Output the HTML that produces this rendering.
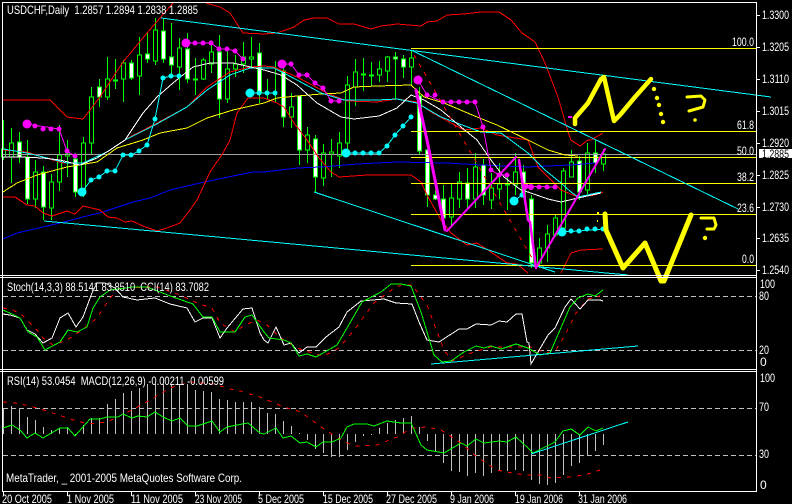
<!DOCTYPE html>
<html><head><meta charset="utf-8"><style>
html,body{margin:0;padding:0;background:#000;width:792px;height:504px;overflow:hidden}
svg{display:block}
text{font-family:"Liberation Sans",sans-serif;font-size:12px;fill:#fff}
.l{fill:none;stroke-width:1;shape-rendering:crispEdges}
.d{fill:none;stroke:#f00;stroke-dasharray:4 6;shape-rendering:crispEdges}
</style></head><body>
<svg width="792" height="504" viewBox="0 0 792 504" xmlns="http://www.w3.org/2000/svg">
<rect width="792" height="504" fill="#000"/>
<!-- wicks -->
<path class="l" stroke="#0f0" d="M3.5 120V160M11.5 128V183M19.5 132V163M27.5 140V204M35.5 160V208M43.5 166V220M51.5 174V220M59.5 125V191M67.5 140V177M75.5 153V197M83.5 137V197M91.5 87V155M99.5 79V107M107.5 57V100M115.5 59V89M123.5 60V102M131.5 60V80M139.5 37V95M147.5 33V63M155.5 18V65M163.5 18V63M171.5 23V75M179.5 38V90M187.5 33V83M195.5 58V95M203.5 58V80M211.5 42V73M219.5 35V118M227.5 50V103M235.5 55V77M243.5 42V73M251.5 37V68M259.5 43V103M267.5 79V100M275.5 61V103M283.5 60V127M291.5 93V128M299.5 96V165M307.5 127V163M315.5 135V192M323.5 144V186M331.5 139V177M339.5 132V168M347.5 76V150M355.5 59V106M363.5 58V91M371.5 62V86M379.5 61V82M387.5 56V82M395.5 52V100M403.5 55V78M411.5 50V86M419.5 87V155M427.5 148V207M435.5 190V200M443.5 185V228M451.5 183V226M459.5 172V208M467.5 168V210M475.5 153V208M483.5 159V205M491.5 173V209M499.5 163V199M507.5 173V210M515.5 153V195M523.5 165V198M531.5 195V268M539.5 238V268M547.5 225V262M555.5 215V237M563.5 168V230M571.5 150V177M579.5 156V200M587.5 143V194M595.5 140V173M603.5 149V171"/>
<!-- hollow bodies -->
<path class="l" stroke="#0f0" style="fill:#000" d="M1.5 149h4V157h-4zM9.5 143h4V157h-4zM33.5 172h4V199h-4zM49.5 182h4V208h-4zM57.5 155h4V182h-4zM65.5 154h4V156h-4zM81.5 143h4V190h-4zM89.5 97h4V143h-4zM105.5 79h4V97h-4zM121.5 63h4V79h-4zM137.5 55h4V76h-4zM153.5 30h4V61h-4zM177.5 48h4V67h-4zM201.5 60h4V79h-4zM209.5 52h4V64h-4zM225.5 69h4V99h-4zM233.5 64h4V69h-4zM241.5 57h4V64h-4zM249.5 57h4V59h-4zM289.5 107h4V117h-4zM305.5 135h4V150h-4zM321.5 153h4V178h-4zM329.5 152h4V154h-4zM337.5 143h4V156h-4zM345.5 85h4V143h-4zM353.5 72h4V87h-4zM377.5 69h4V75h-4zM385.5 57h4V71h-4zM409.5 58h4V67h-4zM449.5 198h4V217h-4zM457.5 182h4V199h-4zM473.5 167h4V199h-4zM489.5 188h4V200h-4zM497.5 184h4V189h-4zM513.5 172h4V185h-4zM537.5 248h4V263h-4zM545.5 234h4V248h-4zM553.5 218h4V235h-4zM561.5 171h4V228h-4zM569.5 162h4V177h-4zM585.5 153h4V190h-4zM601.5 154h4V164h-4zM113.5 80h4v1h-4zM193.5 79h4v1h-4zM361.5 74h4v1h-4zM369.5 75h4v1h-4z"/>
<!-- white bodies -->
<path class="l" stroke="#0f0" style="fill:#fff" d="M17.5 142h4V157h-4zM25.5 157h4V199h-4zM41.5 172h4V207h-4zM73.5 159h4V192h-4zM97.5 87h4V97h-4zM129.5 63h4V78h-4zM145.5 54h4V59h-4zM161.5 31h4V59h-4zM169.5 57h4V65h-4zM185.5 49h4V79h-4zM217.5 52h4V99h-4zM257.5 53h4V93h-4zM281.5 71h4V117h-4zM297.5 96h4V150h-4zM313.5 139h4V177h-4zM393.5 57h4V59h-4zM401.5 59h4V67h-4zM417.5 96h4V151h-4zM425.5 150h4V195h-4zM433.5 195h4V199h-4zM441.5 199h4V218h-4zM465.5 183h4V199h-4zM481.5 165h4V195h-4zM505.5 184h4V185h-4zM521.5 172h4V197h-4zM529.5 199h4V263h-4zM577.5 161h4V192h-4zM593.5 153h4V163h-4z"/>
<!-- bid line -->
<path class="l" stroke="#a0a0a0" d="M3 154.5H756"/>
<!-- blue MA -->
<polyline class="l" stroke="#00f" points="3,239 17,233 43,227 60,223 83,217 103,212 133,202 150,198 170,190 200,183 233,176 253,172 264,172 297,168 321,167 357,164 397,162 447,163 481,165 528,167 548,166 571,165 595,163"/>
<!-- red bands -->
<polyline class="l" stroke="#f00" points="3,100 50,100 67,117 83,119 100,97 123,62 147,33 173,3"/>
<polyline class="l" stroke="#f00" points="206,3 220,7 230,13 243,33 264,34 277,33 294,27 304,20 314,18 327,18 339,24 354,24 371,29 381,26 397,24 421,26 427,22 437,21 447,15 464,14 481,12 499,12 511,20 522,33 528,37 535,42 545,63 558,97 568,132 571,140 580,146 588,140 591,140 603,133"/>
<polyline class="l" stroke="#f00" points="3,197 15,197 27,205 35,206 43,213 52,216 67,211 75,214 83,206 100,210 108,217 117,218 125,222 132,221 143,226 157,231 167,228 180,223 190,210 197,200 210,172 223,153 230,140 237,113 248,98 264,98 277,103 284,107 294,123 307,140 319,158 331,172 339,177 367,175 411,175 421,182 427,195 441,220 451,233 467,245 477,243 491,252 507,263 517,264 528,273"/>
<polyline class="l" stroke="#f00" points="561,273 571,253 581,250 603,249"/>
<!-- red mid -->
<polyline class="l" stroke="#f00" points="3,150 27,152 43,157 63,163 83,163 107,152 128,138 157,123 187,107 207,87 230,72 250,67 264,66 274,67 297,77 327,93 347,101 377,102 397,99 417,102 431,112 451,123 464,130 481,128 497,135 528,140 538,167 561,190 578,197 595,195 603,192"/>
<!-- yellow MA -->
<polyline class="l" stroke="#ff0" points="3,192 17,183 37,175 67,167 97,162 117,148 143,140 160,133 187,128 207,118 233,110 264,103 277,98 297,96 321,94 341,93 354,87 377,86 411,85 424,97 444,103 477,117 497,125 528,140 548,150 565,155 578,156"/>
<!-- cyan MA -->
<polyline class="l" stroke="#0ff" points="3,149 27,153 43,157 67,163 83,163 107,152 125,140 155,125 187,107 207,90 230,75 250,68 264,68 274,68 297,80 321,93 344,100 377,100 397,99 417,103 441,117 481,132 501,133 528,153 545,170 561,183 571,192 578,197 601,192"/>
<!-- white MA -->
<polyline class="l" stroke="#fff" points="3,157 20,157 43,158 60,160 80,165 97,158 110,150 125,140 143,113 157,97 173,83 193,67 210,63 233,63 264,70 281,75 297,85 317,103 341,117 354,119 379,116 397,108 411,95 424,100 441,110 461,127 477,140 491,160 504,177 521,190 528,192 548,199 561,202 578,198 601,193"/>
<!-- magenta SAR -->
<g fill="#f0f" stroke="none">
<polyline class="l" stroke="#f0f" points="27,124 59,129 67,151 75,156"/>
<circle cx="27" cy="124" r="4.5"/><circle cx="35" cy="126" r="2.5"/><circle cx="43" cy="129" r="2.5"/><circle cx="51" cy="129" r="2.5"/><circle cx="59" cy="129" r="2.5"/><circle cx="67" cy="151" r="2.5"/><circle cx="75" cy="156" r="2.5"/>
<polyline class="l" stroke="#f0f" points="187,43 211,43 219,49 227,49 235,51 243,59"/>
<circle cx="186" cy="43" r="4.5"/><circle cx="195" cy="43" r="2.5"/><circle cx="203" cy="43" r="2.5"/><circle cx="211" cy="43" r="2.5"/><circle cx="219" cy="49" r="2.5"/><circle cx="227" cy="49" r="2.5"/><circle cx="235" cy="51" r="2.5"/><circle cx="243" cy="59" r="2.5"/>
<polyline class="l" stroke="#f0f" points="282,64 291,64 299,75 307,75 315,83 323,88 331,101 339,101"/>
<circle cx="282" cy="64" r="4.5"/><circle cx="291" cy="64" r="2.5"/><circle cx="299" cy="75" r="2.5"/><circle cx="307" cy="75" r="2.5"/><circle cx="315" cy="83" r="2.5"/><circle cx="323" cy="88" r="2.5"/><circle cx="331" cy="101" r="2.5"/><circle cx="339" cy="101" r="2.5"/>
<polyline class="l" stroke="#f0f" points="418,80 427,95 443,102 475,102 483,127 491,170 499,175 507,175"/>
<circle cx="418" cy="80" r="4.5"/><circle cx="427" cy="95" r="2.5"/><circle cx="435" cy="95" r="2.5"/><circle cx="443" cy="102" r="2.5"/><circle cx="451" cy="102" r="2.5"/><circle cx="459" cy="102" r="2.5"/><circle cx="467" cy="102" r="2.5"/><circle cx="475" cy="102" r="2.5"/><circle cx="483" cy="127" r="2.5"/><circle cx="491" cy="170" r="2.5"/><circle cx="499" cy="175" r="2.5"/><circle cx="507" cy="175" r="2.5"/>
<polyline class="l" stroke="#f0f" points="525,186 555,187"/>
<circle cx="525" cy="186" r="3.5"/><circle cx="531" cy="187" r="3"/><circle cx="539" cy="187" r="2.5"/><circle cx="547" cy="187" r="2.5"/><circle cx="555" cy="187" r="2.5"/>
<rect x="568" y="116" width="4" height="2"/>
</g>
<!-- cyan SAR -->
<g fill="#0ff">
<polyline class="l" stroke="#0ff" points="82,192 91,180 99,177 107,171 115,171 123,155 131,155 139,151 147,145 155,119 163,78 171,76 179,76"/>
<circle cx="82" cy="192" r="4.5"/><circle cx="91" cy="180" r="2.5"/><circle cx="99" cy="177" r="2.5"/><circle cx="107" cy="171" r="2.5"/><circle cx="115" cy="171" r="2.5"/><circle cx="123" cy="155" r="2.5"/><circle cx="131" cy="155" r="2.5"/><circle cx="139" cy="151" r="2.5"/><circle cx="147" cy="145" r="2.5"/><circle cx="155" cy="119" r="2.5"/><circle cx="163" cy="78" r="2.5"/><circle cx="171" cy="76" r="2.5"/><circle cx="179" cy="76" r="2.5"/>
<polyline class="l" stroke="#0ff" points="250,93 275,93"/>
<circle cx="250" cy="93" r="4.5"/><circle cx="259" cy="93" r="2.5"/><circle cx="267" cy="93" r="2.5"/><circle cx="275" cy="93" r="2.5"/>
<polyline class="l" stroke="#0ff" points="346,153 379,153 387,146 395,135 403,126 411,117"/>
<circle cx="346" cy="153" r="4.5"/><circle cx="355" cy="153" r="2.5"/><circle cx="363" cy="153" r="2.5"/><circle cx="371" cy="153" r="2.5"/><circle cx="379" cy="153" r="2.5"/><circle cx="387" cy="146" r="2.5"/><circle cx="395" cy="135" r="2.5"/><circle cx="403" cy="126" r="2.5"/><circle cx="411" cy="117" r="2.5"/>
<polyline class="l" stroke="#0ff" points="514,201 522,195"/>
<circle cx="514" cy="201" r="4.5"/><circle cx="522" cy="195" r="2.5"/>
<polyline class="l" stroke="#0ff" points="562,232 579,231 603,229"/>
<circle cx="562" cy="232" r="4.5"/><circle cx="571" cy="231" r="2.5"/><circle cx="579" cy="231" r="2.5"/><circle cx="587" cy="229" r="2.5"/><circle cx="595" cy="229" r="2.5"/><circle cx="603" cy="229" r="2.5"/>
</g>
<!-- red dashed trend -->
<path class="d" d="M414 55L536 265"/>
<!-- fib -->
<path class="l" stroke="#ff0" d="M411 48.5H756M411 131.5H756M411 157.5H756M411 183.5H756M411 214.5H756M411 265.5H756"/>
<!-- cyan trendlines -->
<path class="l" stroke="#0ff" d="M161 18L771 97M411 50L738 209M314 192L555 272M44 221L628 275"/>
<!-- magenta zigzag -->
<g fill="none" stroke="#f0f" stroke-linecap="round">
<path stroke-width="3" d="M416 90L427 140L445 230"/>
<path stroke-width="2" d="M447 231L516 157"/>
<path stroke-width="2.5" d="M519 160L528 220L530 222L536 268"/>
<path stroke-width="2" d="M536 268L605 149"/>
</g>
<!-- yellow hand drawing -->
<g fill="none" stroke="#ff0" stroke-linecap="round" stroke-linejoin="round">
<path stroke-width="4.5" d="M575 124L575 118L588 103L601 79L604 77L614 121L620 115L635 97L651 79"/>
<path stroke-width="3" d="M687 97L701 96L705 100L703 107L689 111"/>
<path stroke-width="5" d="M605 214L606 230L623 268L645 243L661 281L664 281L691 215"/>
<path stroke-width="3" d="M701 218L714 218L716 225L714 229L707 229"/>
</g>
<g fill="#ff0">
<circle cx="654" cy="89" r="2.2"/><circle cx="657" cy="98" r="2.2"/><circle cx="659" cy="105" r="2.2"/><circle cx="661" cy="114" r="2.2"/><circle cx="663" cy="122" r="2.2"/><circle cx="695" cy="120" r="1.8"/><circle cx="705" cy="238" r="2.2"/>
<rect x="597" y="212" width="2" height="2"/><rect x="597" y="220" width="1" height="2"/>
</g>

<!-- Stoch panel -->
<path class="l" stroke="#c0c0c0" stroke-dasharray="5 3" d="M3 296.5H756M3 350.5H756M3 408.5H756M3 455.5H756"/>
<polyline class="d" stroke-dasharray="4 6" points="3,308 13,310 22,315 37,330 43,338 53,345 67,340 82,330 97,318 110,298 120,288 157,287 180,295 197,303 212,308 220,323 235,332 245,325 257,320 267,325 281,338 297,348 309,352 324,356 339,348 354,330 374,303 397,286 412,285 427,305 444,350 452,361 471,353 491,347 527,347 531,347 541,351 550,353 556,350 565,335 576,313 588,299 600,296"/>
<polyline class="l" stroke="#fff" points="3,314 10,315 20,318 27,330 35,334 43,343 52,338 60,318 68,313 76,327 83,317 92,293 97,283 105,283 115,288 123,297 137,300 155,298 170,304 187,308 195,322 203,318 212,318 220,338 227,328 243,309 252,308 260,333 264,340 268,343 276,327 284,345 291,343 299,353 307,347 316,347 326,337 339,327 347,312 361,301 384,299 396,303 412,304 419,322 427,340 439,342 459,329 467,329 476,324 491,325 499,321 507,322 516,314 522,314 527,342 529,343 531,364 548,335 555,328 565,307 571,299 580,309 588,300 600,300 603,301"/>
<polyline class="l" stroke="#0f0" points="3,310 12,314 20,318 28,332 37,337 45,350 60,342 68,330 77,332 87,327 93,308 100,297 110,290 133,287 147,287 173,297 193,304 203,317 212,317 220,332 235,332 245,317 252,315 264,332 269,338 284,340 291,343 299,356 307,354 316,357 337,345 347,328 362,302 381,292 391,284 401,284 411,286 421,312 434,355 442,362 451,361 464,352 476,346 484,348 491,346 501,349 516,344 528,348 540,355 550,353 560,330 570,307 578,298 588,294 595,296 603,290"/>
<path class="l" stroke="#0ff" d="M431 364L638 346"/>

<!-- MACD histogram -->
<path class="l" stroke="#c0c0c0" d="M3.5 434V408M11.5 434V406M19.5 434V409M27.5 434V417M35.5 434V420M43.5 434V427M51.5 434V430M59.5 434V428M67.5 434V427M75.5 434V435M83.5 434V425M91.5 434V418M99.5 434V418M107.5 434V404M115.5 434V399M123.5 434V393M131.5 434V391M139.5 434V388M147.5 434V384M155.5 434V384M163.5 434V384M171.5 434V384M179.5 434V384M187.5 434V384M195.5 434V390M203.5 434V391M211.5 434V392M219.5 434V399M227.5 434V400M235.5 434V402M243.5 434V402M251.5 434V402M259.5 434V407M267.5 434V413M275.5 434V414M283.5 434V421M291.5 434V426M299.5 434V433M307.5 434V440M315.5 434V449M323.5 434V453M331.5 434V457M339.5 434V457M347.5 434V450M355.5 434V442M363.5 434V436M371.5 434V435M379.5 434V428M387.5 434V423M395.5 434V420M403.5 434V418M411.5 434V416M419.5 434V427M427.5 434V441M435.5 434V452M443.5 434V463M451.5 434V471M459.5 434V472M467.5 434V476M475.5 434V473M483.5 434V476M491.5 434V473M499.5 434V471M507.5 434V471M515.5 434V470M523.5 434V471M531.5 434V480M539.5 434V484M547.5 434V485M555.5 434V483M563.5 434V475M571.5 434V466M579.5 434V463M587.5 434V455M595.5 434V451M603.5 434V445"/>
<polyline class="d" points="3,402 17,403 37,408 50,412 70,419 88,424 107,422 132,410 150,400 170,388 190,382 213,384 230,389 240,391 263,398 267,400 284,407 301,412 324,429 341,440 354,446 377,445 397,437 412,428 427,427 441,430 461,443 477,457 497,470 517,474 531,475 541,475 551,478 571,477 588,474 600,470"/>
<polyline class="l" stroke="#0f0" points="3,428 12,425 20,430 27,438 35,433 43,438 60,428 68,428 75,436 90,419 100,419 107,417 118,417 123,414 132,418 138,416 147,417 155,412 163,417 172,421 180,418 188,426 197,426 212,421 220,432 227,427 237,425 248,423 260,433 264,434 276,428 283,438 291,436 300,443 307,442 316,447 323,442 332,442 341,438 347,427 354,424 367,424 374,426 387,421 401,423 411,423 421,445 427,450 444,453 461,443 467,446 476,439 484,443 499,441 507,442 516,437 528,448 533,453 545,447 555,442 563,431 571,429 580,435 588,427 596,431 603,428"/>
<path class="l" stroke="#0ff" d="M531 454L628 422"/>

<!-- frames -->
<g fill="#fff" shape-rendering="crispEdges">
<rect x="2" y="2" width="755" height="1"/>
<rect x="2" y="2" width="1" height="490"/>
<rect x="756" y="2" width="1" height="490"/>
<rect x="0" y="275" width="757" height="1"/>
<rect x="0" y="277" width="757" height="1"/>
<rect x="0" y="369" width="757" height="1"/>
<rect x="0" y="371" width="757" height="1"/>
<rect x="2" y="491" width="755" height="1"/>
</g>
<!-- ticks -->
<path class="l" stroke="#fff" d="M757 15.5h3M757 47.5h3M757 79.5h3M757 111.5h3M757 143.5h3M757 175.5h3M757 207.5h3M757 238.5h3M757 270.5h3M3.5 492v4M67.5 492v4M131.5 492v4M195.5 492v4M259.5 492v4M323.5 492v4M387.5 492v4M451.5 492v4M515.5 492v4M579.5 492v4"/>

<!-- text -->
<text x="7" y="14" textLength="191" lengthAdjust="spacingAndGlyphs" xml:space="preserve">USDCHF,Daily  1.2857 1.2894 1.2838 1.2885</text>
<text x="7" y="291" textLength="202" lengthAdjust="spacingAndGlyphs" xml:space="preserve">Stoch(14,3,3) 88.5141 83.8510  CCI(14) 83.7082</text>
<text x="7" y="385" textLength="217" lengthAdjust="spacingAndGlyphs" xml:space="preserve">RSI(14) 53.0454  MACD(12,26,9) -0.00211 -0.00599</text>
<text x="6" y="482" textLength="236" lengthAdjust="spacingAndGlyphs">MetaTrader, _ 2001-2005 MetaQuotes Software Corp.</text>

<g text-anchor="start">
<text x="762" y="19" textLength="27" lengthAdjust="spacingAndGlyphs">1.3300</text>
<text x="762" y="51" textLength="27" lengthAdjust="spacingAndGlyphs">1.3205</text>
<text x="762" y="83" textLength="27" lengthAdjust="spacingAndGlyphs">1.3110</text>
<text x="762" y="115" textLength="27" lengthAdjust="spacingAndGlyphs">1.3015</text>
<text x="762" y="147" textLength="27" lengthAdjust="spacingAndGlyphs">1.2920</text>
<text x="762" y="179" textLength="27" lengthAdjust="spacingAndGlyphs">1.2825</text>
<text x="762" y="211" textLength="27" lengthAdjust="spacingAndGlyphs">1.2730</text>
<text x="762" y="242" textLength="27" lengthAdjust="spacingAndGlyphs">1.2635</text>
<text x="762" y="274" textLength="27" lengthAdjust="spacingAndGlyphs">1.2540</text>
</g>
<rect x="759" y="149" width="33" height="9" fill="#fff" shape-rendering="crispEdges"/>
<text x="762" y="158" textLength="27" lengthAdjust="spacingAndGlyphs" style="fill:#000">1.2885</text>

<text x="732" y="46" textLength="22" lengthAdjust="spacingAndGlyphs">100.0</text>
<text x="737" y="129" textLength="17" lengthAdjust="spacingAndGlyphs">61.8</text>
<text x="737" y="155" textLength="17" lengthAdjust="spacingAndGlyphs">50.0</text>
<text x="737" y="181" textLength="17" lengthAdjust="spacingAndGlyphs">38.2</text>
<text x="737" y="212" textLength="17" lengthAdjust="spacingAndGlyphs">23.6</text>
<text x="742" y="263" textLength="12" lengthAdjust="spacingAndGlyphs">0.0</text>

<text x="760" y="288" textLength="15" lengthAdjust="spacingAndGlyphs">100</text>
<text x="759" y="300" textLength="10" lengthAdjust="spacingAndGlyphs">80</text>
<text x="759" y="354" textLength="10" lengthAdjust="spacingAndGlyphs">20</text>
<text x="760" y="366">0</text>
<text x="760" y="382" textLength="15" lengthAdjust="spacingAndGlyphs">100</text>
<text x="759" y="411" textLength="10" lengthAdjust="spacingAndGlyphs">70</text>
<text x="759" y="458" textLength="10" lengthAdjust="spacingAndGlyphs">30</text>
<text x="760" y="489">0</text>

<text x="2" y="503" textLength="50" lengthAdjust="spacingAndGlyphs">20 Oct 2005</text>
<text x="67" y="503" textLength="47" lengthAdjust="spacingAndGlyphs">1 Nov 2005</text>
<text x="131" y="503" textLength="52" lengthAdjust="spacingAndGlyphs">11 Nov 2005</text>
<text x="195" y="503" textLength="47" lengthAdjust="spacingAndGlyphs">23 Nov 2005</text>
<text x="258" y="503" textLength="46" lengthAdjust="spacingAndGlyphs">5 Dec 2005</text>
<text x="323" y="503" textLength="50" lengthAdjust="spacingAndGlyphs">15 Dec 2005</text>
<text x="386" y="503" textLength="51" lengthAdjust="spacingAndGlyphs">27 Dec 2005</text>
<text x="450" y="503" textLength="44" lengthAdjust="spacingAndGlyphs">9 Jan 2006</text>
<text x="515" y="503" textLength="48" lengthAdjust="spacingAndGlyphs">19 Jan 2006</text>
<text x="578" y="503" textLength="49" lengthAdjust="spacingAndGlyphs">31 Jan 2006</text>
</svg>
</body></html>
